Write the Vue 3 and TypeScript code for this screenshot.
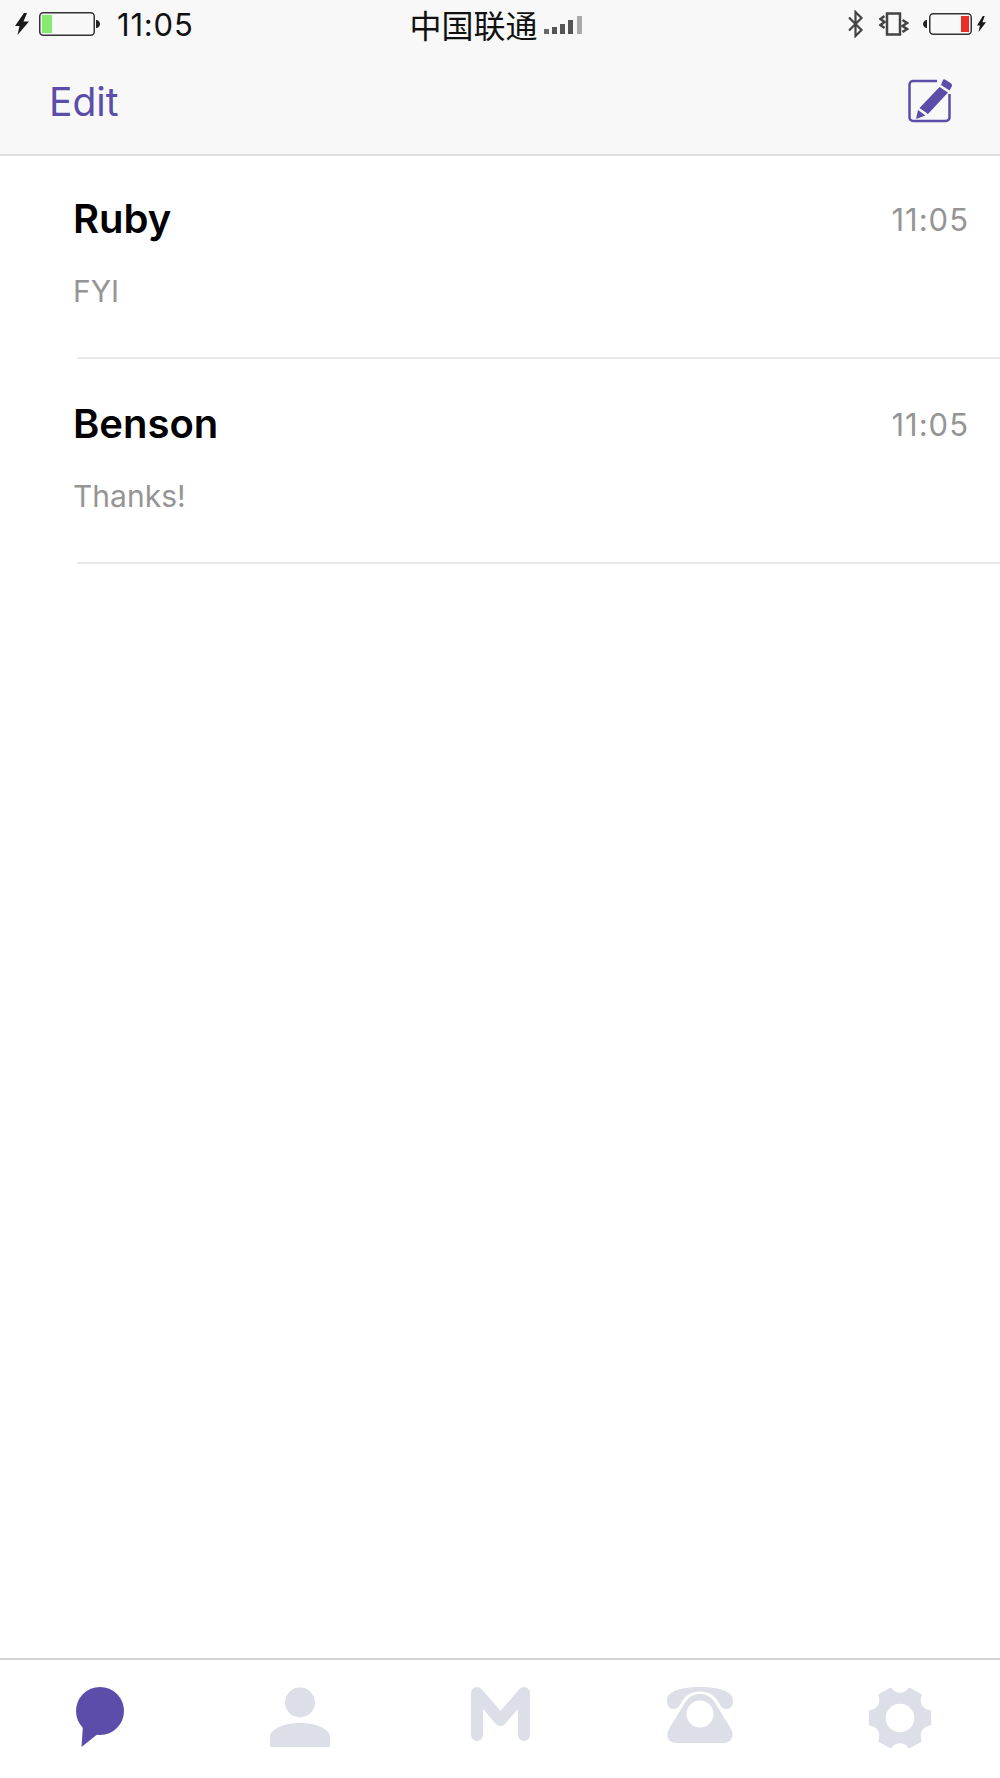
<script setup lang="ts">
interface Thread {
  name: string
  preview: string
  time: string
}

const threads: Thread[] = [
  { name: 'Ruby', preview: 'FYI', time: '11:05' },
  { name: 'Benson', preview: 'Thanks!', time: '11:05' }
]

const signalBars = [
  { x: 0, h: 5, fill: '#6a6a6a' },
  { x: 8, h: 7, fill: '#555' },
  { x: 16, h: 10, fill: '#555' },
  { x: 24, h: 14, fill: '#555' },
  { x: 33, h: 18, fill: '#aaa' }
]

// six teeth, flat tips left and right, scooped notches in between
function gearPath(cx: number, cy: number, outer: number, ctrl: number): string {
  const pt = (r: number, deg: number) => {
    const a = (deg * Math.PI) / 180
    return `${(cx + r * Math.cos(a)).toFixed(2)} ${(cy + r * Math.sin(a)).toFixed(2)}`
  }
  let d = `M${pt(outer, -13)}`
  for (let i = 0; i < 6; i++) {
    const a = i * 60
    d += ` L${pt(outer, a + 13)} Q${pt(ctrl, a + 30)} ${pt(outer, a + 47)}`
  }
  return d + ' Z'
}

const gear = gearPath(32, 31, 32, 20)
</script>

<template>
  <div class="screen">
    <header class="top">
      <div class="status">
        <div class="status-left">
          <svg class="bolt" width="14" height="22" viewBox="0 0 14 22">
            <path d="M9 0 0 13h4.500L2.500 22 14 8.500H8.500L12 0z" fill="#1a1a1a" />
          </svg>
          <svg class="batt" width="61" height="24" viewBox="0 0 61 24">
            <rect x="0.75" y="0.75" width="54.5" height="22.5" rx="3.5" fill="none" stroke="#333" stroke-width="1.5" />
            <rect x="3" y="3" width="10" height="18" fill="#86ea6e" />
            <path d="M57 8c2.400 0 4 1.800 4 4s-1.600 4-4 4z" fill="#222" />
          </svg>
          <span class="clock">11:05</span>
        </div>
        <div class="status-mid">
          <span class="carrier">中国联通</span>
          <svg class="signal" width="38" height="18" viewBox="0 0 38 18">
            <rect v-for="b in signalBars" :key="b.x" :x="b.x" :y="18 - b.h" width="5" :height="b.h" :fill="b.fill" />
          </svg>
        </div>
        <div class="status-right">
          <svg width="17" height="28" viewBox="0 0 17 28" fill="none" stroke="#444" stroke-width="2.2">
            <path d="M2 7.500 14.500 20 8.500 26V2l6 6L2 20.500" />
          </svg>
          <svg class="vib" width="30" height="24" viewBox="0 0 30 24" fill="none" stroke="#444">
            <rect x="8" y="1.500" width="13" height="21" stroke-width="2.500" />
            <path stroke-width="2.500" d="M5.500 4 1.500 7 5.500 10 1.500 13 5.500 16M23.500 8 28 11 23.500 14 28 17 23.500 20" />
          </svg>
          <svg class="batt-r" width="49" height="22" viewBox="0 0 49 22">
            <path d="M4 7c-2.400 0-4 1.800-4 4s1.600 4 4 4z" fill="#222" />
            <rect x="6.750" y="0.750" width="41.500" height="20.500" rx="3.500" fill="none" stroke="#333" stroke-width="1.500" />
            <rect x="38" y="3" width="8" height="16" fill="#ee2e24" />
          </svg>
          <svg class="bolt-r" width="9" height="16" viewBox="0 0 14 22" preserveAspectRatio="none">
            <path d="M9 0 0 13h4.500L2.500 22 14 8.500H8.500L12 0z" fill="#1a1a1a" />
          </svg>
        </div>
      </div>
      <div class="nav">
        <span class="edit">Edit</span>
        <svg class="compose" width="45" height="44" viewBox="0 0 45 44" fill="none">
          <path d="M29 2H5a3.500 3.500 0 0 0-3.500 3.500v33A3.500 3.500 0 0 0 5 42h33a3.500 3.500 0 0 0 3.500-3.500V15" stroke="#5b4da9" stroke-width="2.500" />
          <path d="M37 0.500 42.500 4a3 3 0 0 1 1 4L41.500 11.500 33 6 34.500 2a2 2 0 0 1 2.500-1.500zM31.500 8l8.500 5.500L20 35l-8.500-6zM10 31l7.500 5.500L8 40z" fill="#5b4da9" />
        </svg>
      </div>
    </header>

    <main class="list">
      <div v-for="t in threads" :key="t.name" class="row">
        <div class="row-head">
          <span class="name">{{ t.name }}</span>
          <span class="time">{{ t.time }}</span>
        </div>
        <div class="preview">{{ t.preview }}</div>
      </div>
    </main>

    <nav class="tabs">
      <div class="tab">
        <svg width="50" height="60" viewBox="0 0 50 60">
          <circle cx="25" cy="24" r="24" fill="#5b4da9" />
          <path d="M8 38 6.500 60 24 46z" fill="#5b4da9" />
        </svg>
      </div>
      <div class="tab">
        <svg width="60" height="60" viewBox="0 0 60 60" fill="#dcdfe8">
          <circle cx="30" cy="15.500" r="15" />
          <path d="M0 60V50C0 42 14 36 30 36S60 42 60 50V60Z" />
        </svg>
      </div>
      <div class="tab">
        <svg width="59" height="54" viewBox="0 0 59 54" fill="none">
          <path d="M6 48V6L29.500 33 53 6V48" stroke="#dcdfe8" stroke-width="12" stroke-linecap="round" stroke-linejoin="round" />
        </svg>
      </div>
      <div class="tab">
        <svg width="66" height="56" viewBox="0 0 66 56" fill="#dcdfe8">
          <path d="M33 0C15 0 0 4 0 13 0 19 2 22 6 22 10 22 12 20 14 16 18 8 25 4.500 33 4.500S48 8 52 16C54 20 56 22 60 22 64 22 66 19 66 13 66 4 51 0 33 0Z" />
          <path fill-rule="evenodd" d="M33 7C24 7 20 12 16 19L2 42C-2 50 2 56 10 56H56C64 56 68 50 64 42L50 19C46 12 42 7 33 7ZM33 13.500A13.500 13.500 0 1 1 33 40.500 13.500 13.500 0 1 1 33 13.500Z" />
        </svg>
      </div>
      <div class="tab">
        <svg width="64" height="62" viewBox="0 0 64 62">
          <path :d="gear" fill="#dcdfe8" />
          <circle cx="32" cy="31" r="14.300" fill="#fff" />
        </svg>
      </div>
    </nav>
  </div>
</template>

<style scoped>
.screen {
  min-height: 1778px;
  display: flex;
  flex-direction: column;
  font-family: Inter, "Noto Sans CJK SC", sans-serif;
  background: #fff;
}
.top {
  background: #f8f8f8;
  border-bottom: 2px solid #dedede;
  height: 156px;
  box-sizing: border-box;
}
.status {
  display: grid;
  grid-template-columns: 1fr auto 1fr;
  align-items: center;
  height: 48px;
}
.status-left {
  display: flex;
  align-items: center;
  padding-left: 15px;
  gap: 10px;
}
.clock {
  margin-left: 7px;
  font-size: 31px;
  letter-spacing: 0.8px;
  color: #111;
}
.status-mid {
  display: flex;
  align-items: center;
  gap: 6px;
  padding-right: 9px;
}
.carrier {
  font-size: 32px;
  line-height: 48px;
  color: #111;
  font-family: "Noto Sans CJK SC", sans-serif;
}
.signal {
  margin-top: 1px;
}
.status-right {
  display: flex;
  align-items: center;
  justify-content: flex-end;
  padding-right: 14px;
}
.vib {
  margin-left: 15px;
}
.batt-r {
  margin-left: 14px;
}
.bolt-r {
  margin-left: 5px;
}
.nav {
  display: flex;
  align-items: center;
  justify-content: space-between;
  padding: 0 47px 0 49px;
  height: 106px;
}
.edit {
  font-size: 39px;
  color: #5b4da9;
}
.list {
  flex: 1;
  margin-top: -2px;
}
.row {
  margin-left: 77px;
  height: 205px;
  box-sizing: border-box;
  border-bottom: 2px solid #e9e9e9;
  padding-top: 42px;
}
.row-head {
  display: flex;
  align-items: center;
  justify-content: space-between;
  margin-left: -4px;
  padding-right: 31px;
}
.name {
  font-size: 40px;
  font-weight: 600;
  line-height: 46px;
  color: #000;
}
.time {
  font-size: 31px;
  letter-spacing: 1px;
  color: #959595;
}
.preview {
  margin: 31px 0 0 -4px;
  font-size: 30px;
  line-height: 36px;
  color: #959595;
}
.tabs {
  height: 120px;
  box-sizing: border-box;
  border-top: 2px solid #d4d4d4;
  display: flex;
  align-items: flex-start;
  padding-top: 27px;
}
.tab {
  flex: 1;
  display: flex;
  justify-content: center;
}
</style>

<style>
body {
  background: #fff;
}
</style>
